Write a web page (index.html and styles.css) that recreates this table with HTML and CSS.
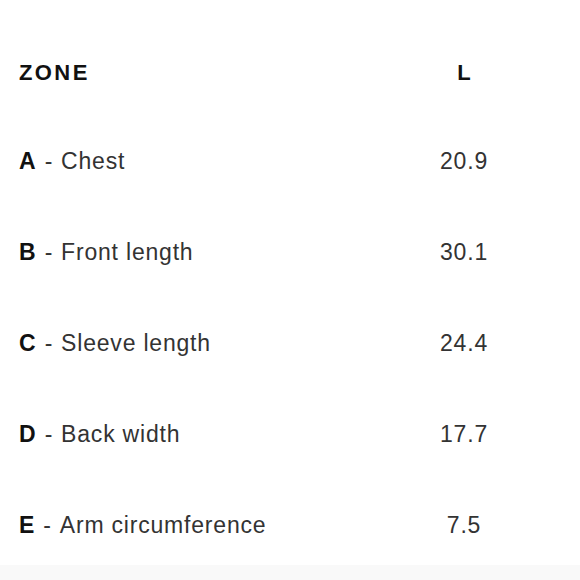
FILE: index.html
```html
<!DOCTYPE html>
<html>
<head>
<meta charset="utf-8">
<link rel="stylesheet" href="styles.css">
</head>
<body>
<div class="table">
  <div class="row head">
    <div class="zone">ZONE</div>
    <div class="val">L</div>
  </div>
  <div class="row">
    <div class="zone"><b class="key">A</b><span class="dash">-</span>Chest</div>
    <div class="val">20.9</div>
  </div>
  <div class="row">
    <div class="zone"><b class="key">B</b><span class="dash">-</span>Front length</div>
    <div class="val">30.1</div>
  </div>
  <div class="row">
    <div class="zone"><b class="key">C</b><span class="dash">-</span>Sleeve length</div>
    <div class="val">24.4</div>
  </div>
  <div class="row">
    <div class="zone"><b class="key">D</b><span class="dash">-</span>Back width</div>
    <div class="val">17.7</div>
  </div>
  <div class="row last">
    <div class="zone"><b class="key">E</b><span class="dash">-</span>Arm circumference</div>
    <div class="val">7.5</div>
  </div>
</div>
<div class="footer"></div>
</body>
</html>
```
FILE: styles.css
```css
html, body {
  margin: 0;
  padding: 0;
  background: #ffffff;
  overflow: hidden;
}
body {
  font-family: "Liberation Sans", Arial, Helvetica, sans-serif;
  color: #333333;
}
.table {
  padding: 30px 0 0 19px;
}
.row {
  display: grid;
  grid-template-columns: 1fr 100px;
  height: 91px;
  line-height: 91px;
  font-size: 23px;
  letter-spacing: 0.8px;
  padding-right: 66px;
}
.row.head {
  height: 86px;
  line-height: 86px;
  font-size: 22px;
  font-weight: bold;
  color: #111111;
  letter-spacing: 2.4px;
}
.row.last {
  height: 85px;
}
.val {
  text-align: center;
}
.head .val {
  letter-spacing: 0;
}
.key {
  color: #111111;
  font-weight: bold;
  letter-spacing: 0;
}
.dash {
  margin: 0 8px 0 9px;
}
.footer {
  height: 15px;
  background: #f9f9f9;
}
```
